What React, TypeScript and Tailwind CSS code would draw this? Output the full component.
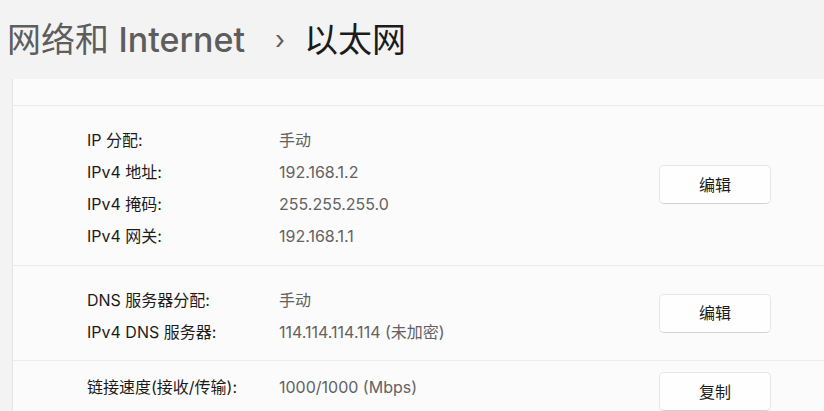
import React from "react";

const FONT = { fontFamily: '"Inter", "Noto Sans CJK SC", sans-serif' };

function Row({ label, value }: { label: string; value: string }) {
  return (
    <div className="flex h-[32px] items-center">
      <div className="w-[192px] shrink-0 text-[16px] text-[#1b1b1b]">{label}</div>
      <div className="text-[16px] text-[#626262]">{value}</div>
    </div>
  );
}

function Btn({ children, className = "" }: { children: React.ReactNode; className?: string }) {
  return (
    <button
      className={
        "h-[39px] w-[112px] shrink-0 rounded-[5px] border border-[#e6e6e6] border-b-[#d2d2d2] bg-[#fefefe] text-[16px] text-[#1b1b1b] " +
        className
      }
    >
      {children}
    </button>
  );
}

export default function App() {
  return (
    <div className="h-[411px] w-[824px] overflow-hidden bg-[#f3f3f3]" style={FONT}>
      <div className="flex h-[79px] items-center pl-[7px] pb-[1px]">
        <span className="text-[34px] font-normal text-[#5d5d5d]">
          网络和 <span className="font-medium">Internet</span>
        </span>
        <span className="ml-[30px] mr-[19px] text-[26px] text-[#5d5d5d]">›</span>
        <span className="text-[34px] font-normal text-[#1b1b1b]">以太网</span>
      </div>
      <div className="ml-[12px] border-l border-[#e3e3e3] bg-[#fbfbfb]">
        <div className="h-[27px] border-b border-[#ebebeb]" />
        <div className="flex h-[160px] items-center border-b border-[#ebebeb] pl-[74px] pr-[53px]">
          <div className="flex-1 pt-[4px]">
            <Row label="IP 分配:" value="手动" />
            <Row label="IPv4 地址:" value="192.168.1.2" />
            <Row label="IPv4 掩码:" value="255.255.255.0" />
            <Row label="IPv4 网关:" value="192.168.1.1" />
          </div>
          <Btn className="mb-[2px]">编辑</Btn>
        </div>
        <div className="flex h-[95px] items-center border-b border-[#ebebeb] pl-[74px] pr-[53px]">
          <div className="flex-1 pt-[5px]">
            <Row label="DNS 服务器分配:" value="手动" />
            <Row label="IPv4 DNS 服务器:" value="114.114.114.114 (未加密)" />
          </div>
          <Btn>编辑</Btn>
        </div>
        <div className="flex items-start pl-[74px] pr-[53px] pt-[8px]">
          <div className="flex-1 pt-[2px]">
            <Row label="链接速度(接收/传输):" value="1000/1000 (Mbps)" />
            <Row label="本地链接 IPv6 地址:" value="fe80::a1b2:c3d4:e5f6:7890%12" />
          </div>
          <Btn className="mt-[3px]">复制</Btn>
        </div>
      </div>
    </div>
  );
}
